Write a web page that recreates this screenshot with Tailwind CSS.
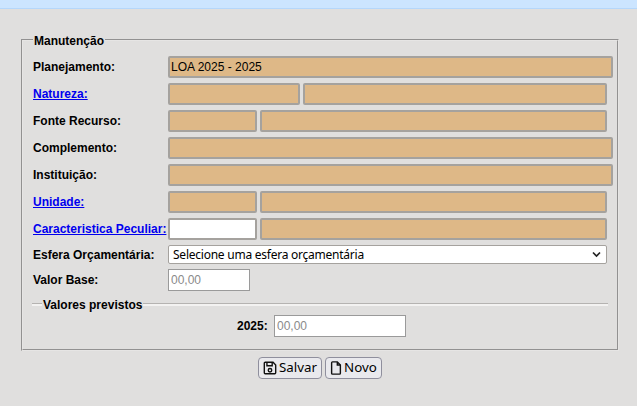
<!DOCTYPE html>
<html lang="pt">
<head>
<meta charset="utf-8">
<script src="https://cdn.jsdelivr.net/npm/@tailwindcss/browser@4"></script>
</head>
<body class="m-0 h-[406px] w-[637px] overflow-hidden bg-[#e0dfde] font-['Liberation_Sans',sans-serif] text-[12px] text-black">
<div class="h-[9px] border-b border-[#b5d7fb] bg-[#cce5ff]"></div>
<form class="px-[21px] pt-[24px]">
  <fieldset class="m-0 h-[318px] w-[598px] border-2 border-[#e6e5e4] [border-style:groove] pl-[10px] pr-[4px] pt-[9px]">
    <legend class="ml-0 translate-y-[1px] px-[1px] text-[12px] leading-[14px] font-bold">Manutenção</legend>
    <div class="flex flex-col gap-[5px]">
      <div class="flex h-[22px] items-center">
        <label class="w-[135px] shrink-0 font-bold">Planejamento:</label>
        <input readonly value="LOA 2025 - 2025" class="h-[22px] w-[445px] border-2 border-[#a5a29e] bg-[#deb887] px-[1px] rounded-[2px] outline-none">
      </div>
      <div class="flex h-[22px] items-center">
        <a href="#" class="w-[135px] shrink-0 font-bold text-[#0000ee] underline">Natureza:</a>
        <input readonly class="h-[22px] w-[132px] border-2 border-[#a5a29e] bg-[#deb887] rounded-[2px]">
        <input readonly class="ml-[3px] h-[22px] w-[304px] border-2 border-[#a5a29e] bg-[#deb887] rounded-[2px]">
      </div>
      <div class="flex h-[22px] items-center">
        <label class="w-[135px] shrink-0 font-bold">Fonte Recurso:</label>
        <input readonly class="h-[22px] w-[89px] border-2 border-[#a5a29e] bg-[#deb887] rounded-[2px]">
        <input readonly class="ml-[3px] h-[22px] w-[347px] border-2 border-[#a5a29e] bg-[#deb887] rounded-[2px]">
      </div>
      <div class="flex h-[22px] items-center">
        <label class="w-[135px] shrink-0 font-bold">Complemento:</label>
        <input readonly class="h-[22px] w-[445px] border-2 border-[#a5a29e] bg-[#deb887] rounded-[2px]">
      </div>
      <div class="flex h-[22px] items-center">
        <label class="w-[135px] shrink-0 font-bold">Instituição:</label>
        <input readonly class="h-[22px] w-[445px] border-2 border-[#a5a29e] bg-[#deb887] rounded-[2px]">
      </div>
      <div class="flex h-[22px] items-center">
        <a href="#" class="w-[135px] shrink-0 font-bold text-[#0000ee] underline">Unidade:</a>
        <input readonly class="h-[22px] w-[89px] border-2 border-[#a5a29e] bg-[#deb887] rounded-[2px]">
        <input readonly class="ml-[3px] h-[22px] w-[347px] border-2 border-[#a5a29e] bg-[#deb887] rounded-[2px]">
      </div>
      <div class="flex h-[22px] items-center">
        <a href="#" class="w-[135px] shrink-0 whitespace-nowrap font-bold text-[#0000ee] underline">Caracteristica Peculiar:</a>
        <input class="h-[22px] w-[89px] border-2 border-[#a5a29e] bg-white rounded-[2px]">
        <input readonly class="ml-[3px] h-[22px] w-[347px] border-2 border-[#a5a29e] bg-[#deb887] rounded-[2px]">
      </div>
      <div class="flex h-[19px] items-center">
        <label class="w-[135px] shrink-0 font-bold">Esfera Orçamentária:</label>
        <div class="relative h-[19px] w-[439px] rounded-[2px] border border-[#a5a29e] bg-white pl-[4px] font-['Noto_Sans',sans-serif] text-[12px] leading-[17px] tracking-[-0.24px]">
          Selecione uma esfera orçamentária
          <svg class="absolute right-[5px] top-[5px] h-[7px] w-[9px]" viewBox="0 0 9 7" fill="none" stroke="#222" stroke-width="1.7"><path d="M1 1.5 4.5 5 8 1.5"/></svg>
        </div>
      </div>
      <div class="flex h-[22px] items-center">
        <label class="w-[135px] shrink-0 font-bold">Valor Base:</label>
        <input placeholder="00,00" class="h-[22px] w-[82px] border border-[#9a9a9a] bg-white px-[2px] placeholder:text-[#8a8a8a]">
      </div>
    </div>
    <div class="mt-[7px] -ml-[1px] flex h-[14px] items-center">
      <span class="h-[2px] w-[10px] shrink-0 bg-[#f3f2f1] shadow-[0_-1px_0_#b5b3b1]"></span>
      <span class="shrink-0 px-[1px] text-[12px] leading-[14px] font-bold whitespace-nowrap">Valores previstos</span>
      <span class="h-[2px] w-[465px] shrink-0 bg-[#f3f2f1] shadow-[0_-1px_0_#b5b3b1]"></span>
    </div>
    <div class="mt-[3px] flex h-[22px] items-center pl-[204px]">
      <label class="w-[37px] font-bold">2025:</label>
      <input placeholder="00,00" class="h-[22px] w-[132px] border border-[#9a9a9a] bg-white px-[2px] placeholder:text-[#8a8a8a]">
    </div>
  </fieldset>
  <div class="mt-[6px] flex justify-center gap-[3px] pl-[3px] font-['Noto_Sans',sans-serif] text-[13.33px]">
    <button type="button" class="flex h-[22px] w-[64px] items-center justify-center gap-[2px] rounded-[4px] border border-[#8f8f9d] bg-[#e9e9ed]">
      <svg class="h-[14px] w-[14px]" viewBox="0 0 16 16" fill="none" stroke="#111" stroke-width="1.6"><path d="M1.5 2.5a1 1 0 0 1 1-1h9l3 3v9a1 1 0 0 1-1 1h-11a1 1 0 0 1-1-1z"/><path d="M4.5 1.5v4h6v-4"/><circle cx="8" cy="10.5" r="2"/></svg>
      Salvar
    </button>
    <button type="button" class="flex h-[22px] w-[57px] items-center justify-center gap-[2px] rounded-[4px] border border-[#8f8f9d] bg-[#e9e9ed]">
      <svg class="h-[14px] w-[12px]" viewBox="0 0 12 16" fill="none" stroke="#111" stroke-width="1.6"><path d="M1 2a1 1 0 0 1 1-1h5.5L11 4.5V14a1 1 0 0 1-1 1H2a1 1 0 0 1-1-1z"/><path d="M7.5 1v3.5H11"/></svg>
      Novo
    </button>
  </div>
</form>
</body>
</html>
